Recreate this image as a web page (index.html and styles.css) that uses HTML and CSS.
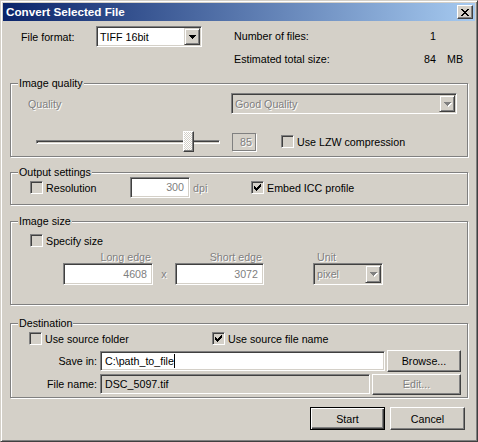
FILE: index.html
```html
<!DOCTYPE html>
<html>
<head>
<meta charset="utf-8">
<title>Convert Selected File</title>
<link rel="stylesheet" href="styles.css">
</head>
<body>
<div class="window">
  <div class="titlebar">
    <span class="title">Convert Selected File</span>
    <div class="close"><svg width="8" height="7" viewBox="0 0 8 7" shape-rendering="crispEdges"><path d="M0 0h2v1H0zM1 1h2v1H1zM2 2h2v1H2zM3 3h2v1H3zM4 4h2v1H4zM5 5h2v1H5zM6 6h2v1H6zM6 0h2v1H6zM5 1h2v1H5zM4 2h2v1H4zM2 4h2v1H2zM1 5h2v1H1zM0 6h2v1H0z" fill="#000"/></svg></div>
  </div>
  <div class="content">
    <div class="top">
      <div class="format">
        <span class="format-label">File format:</span>
        <div class="select fmt-select">
          <span class="select-text">TIFF 16bit</span>
          <span class="drop"><svg width="7" height="4" viewBox="0 0 7 4" shape-rendering="crispEdges"><path d="M0 0h7v1H0zM1 1h5v1H1zM2 2h3v1H2zM3 3h1v1H3z" fill="#000"/></svg></span>
        </div>
      </div>
      <div class="info">
        <span>Number of files:</span><span class="num">1</span><span class="unit"></span>
        <span>Estimated total size:</span><span class="num">84</span><span class="unit">MB</span>
      </div>
    </div>

    <div class="group g-quality">
      <span class="legend">Image quality</span>
      <div class="row q-row1">
        <span class="q-label dis">Quality</span>
        <div class="select q-select disabled">
          <span class="select-text dis">Good Quality</span>
          <span class="drop"><svg class="arrow-dis" width="7" height="4" viewBox="0 0 7 4" shape-rendering="crispEdges"><path d="M0 0h7v1H0zM1 1h5v1H1zM2 2h3v1H2zM3 3h1v1H3z" fill="#808080"/></svg></span>
        </div>
      </div>
      <div class="row q-row2">
        <div class="slider">
          <div class="track"></div>
          <div class="thumb"></div>
        </div>
        <div class="valbox dis">85</div>
        <label class="check c-lzw"><span class="box"></span><span>Use LZW compression</span></label>
      </div>
    </div>

    <div class="group g-output">
      <span class="legend">Output settings</span>
      <div class="row o-row">
        <label class="check c-res"><span class="box"></span><span>Resolution</span></label>
        <div class="field f-300 dis">300</div>
        <span class="dpi dis">dpi</span>
        <label class="check c-icc"><span class="box"><svg width="7" height="7" viewBox="0 0 7 7" shape-rendering="crispEdges"><path d="M6 0h1v1H6zM5 1h2v1H5zM0 2h1v1H0zM4 2h3v1H4zM0 3h2v1H0zM3 3h3v1H3zM0 4h5v1H0zM1 5h3v1H1zM2 6h1v1H2z" fill="#000"/></svg></span><span>Embed ICC profile</span></label>
      </div>
    </div>

    <div class="group g-size">
      <span class="legend">Image size</span>
      <label class="check c-spec"><span class="box"></span><span>Specify size</span></label>
      <div class="size-row">
        <div class="size-col c-long">
          <span class="size-label dis">Long edge</span>
          <div class="field dis">4608</div>
        </div>
        <span class="times dis">x</span>
        <div class="size-col c-short">
          <span class="size-label dis">Short edge</span>
          <div class="field dis">3072</div>
        </div>
        <div class="size-col c-unit">
          <span class="size-label unit-label dis">Unit</span>
          <div class="select u-select disabled">
            <span class="select-text dis">pixel</span>
            <span class="drop"><svg class="arrow-dis" width="7" height="4" viewBox="0 0 7 4" shape-rendering="crispEdges"><path d="M0 0h7v1H0zM1 1h5v1H1zM2 2h3v1H2zM3 3h1v1H3z" fill="#808080"/></svg></span>
          </div>
        </div>
      </div>
    </div>

    <div class="group g-dest">
      <span class="legend">Destination</span>
      <div class="row d-row1">
        <label class="check c-folder"><span class="box"></span><span>Use source folder</span></label>
        <label class="check c-name"><span class="box"><svg width="7" height="7" viewBox="0 0 7 7" shape-rendering="crispEdges"><path d="M6 0h1v1H6zM5 1h2v1H5zM0 2h1v1H0zM4 2h3v1H4zM0 3h2v1H0zM3 3h3v1H3zM0 4h5v1H0zM1 5h3v1H1zM2 6h1v1H2z" fill="#000"/></svg></span><span>Use source file name</span></label>
      </div>
      <div class="row d-row">
        <span class="d-label">Save in:</span>
        <div class="field f-save"><span>C:\path_to_file</span><span class="caret"></span></div>
        <div class="btn b-browse">Browse...</div>
      </div>
      <div class="row d-row d-row3">
        <span class="d-label">File name:</span>
        <div class="field f-name">DSC_5097.tif</div>
        <div class="btn b-edit dis">Edit...</div>
      </div>
    </div>

    <div class="buttons">
      <div class="btn b-main default">Start</div>
      <div class="btn b-main">Cancel</div>
    </div>
  </div>
</div>
</body>
</html>
```

FILE: styles.css
```css
html, body {
  margin: 0;
  padding: 0;
  background: #d4d0c8;
}

body {
  font-family: "Liberation Sans", Arial, sans-serif;
  font-size: 10.7px;
  color: #000;
}

.window {
  width: 478px;
  height: 442px;
  box-sizing: border-box;
  border: 1px solid;
  border-color: #d4d0c8 #404040 #404040 #d4d0c8;
  box-shadow: inset 1px 1px #fff, inset -1px -1px #808080;
  padding: 2px;
  background: #d4d0c8;
}

.titlebar {
  height: 18px;
  display: flex;
  align-items: center;
  justify-content: space-between;
  background: linear-gradient(to right, #0a246a, #a6caf0);
}

.title {
  color: #fff;
  font-weight: bold;
  font-size: 11.7px;
  padding-left: 3px;
  line-height: 14px;
}

.close {
  width: 16px;
  height: 14px;
  box-sizing: border-box;
  margin-right: 2px;
  background: #d4d0c8;
  border: 1px solid;
  border-color: #fff #404040 #404040 #fff;
  box-shadow: inset -1px -1px #808080;
  display: flex;
  align-items: center;
  justify-content: center;
}

.close svg {
  display: block;
  margin-left: -1px;
}

.content {
  padding: 0 7px;
}

.dis {
  color: #808080;
  text-shadow: 1px 1px 0 #fff;
}

/* top section */
.top {
  height: 62px;
  box-sizing: border-box;
  padding-top: 5px;
  display: flex;
  align-items: flex-start;
}

.format {
  display: flex;
  align-items: center;
  height: 21px;
}

.format-label {
  width: 86px;
  box-sizing: border-box;
  padding-left: 11px;
}

.info {
  margin-left: 32px;
  margin-top: 3px;
  display: grid;
  grid-template-columns: 180px 22px 41px;
  row-gap: 9px;
  line-height: 14px;
}

.info .num {
  text-align: right;
}

.info .unit {
  padding-left: 11px;
}

/* select */
.select {
  box-sizing: border-box;
  height: 21px;
  padding: 1px;
  display: flex;
  align-items: center;
  background: #fff;
  border: 1px solid;
  border-color: #808080 #fff #fff #808080;
  box-shadow: inset 1px 1px #404040, inset -1px -1px #d4d0c8;
}

.select.disabled {
  background: #d4d0c8;
}

.select-text {
  flex: 1;
  padding-left: 2px;
  white-space: nowrap;
}

.drop {
  width: 16px;
  height: 17px;
  box-sizing: border-box;
  background: #d4d0c8;
  border: 1px solid;
  border-color: #d4d0c8 #404040 #404040 #d4d0c8;
  box-shadow: inset 1px 1px #fff, inset -1px -1px #808080;
  display: flex;
  align-items: center;
  justify-content: center;
}

.drop svg {
  display: block;
}

.arrow-dis {
  filter: drop-shadow(1px 1px 0 #fff);
}

.fmt-select {
  width: 106px;
}

/* group boxes */
.group {
  position: relative;
  border: 1px solid #808080;
  box-shadow: inset 1px 1px #fff, 1px 1px #fff;
}

.legend {
  position: absolute;
  top: -8px;
  left: 7px;
  padding: 0 1px;
  background: #d4d0c8;
  line-height: 14px;
  white-space: nowrap;
}

.row {
  display: flex;
  align-items: center;
}

/* image quality */
.g-quality {
  padding: 9px 0 4px;
}

.q-row1 {
  height: 21px;
}

.q-label {
  width: 220px;
  box-sizing: border-box;
  padding-left: 17px;
}

.q-select {
  width: 226px;
}

.q-row2 {
  height: 21px;
  margin-top: 17px;
}

.slider {
  position: relative;
  width: 184px;
  height: 21px;
  margin-left: 25px;
  display: flex;
  align-items: center;
}

.track {
  width: 100%;
  height: 4px;
  box-sizing: border-box;
  border: 1px solid;
  border-color: #808080 #fff #fff #808080;
  box-shadow: inset 1px 1px #404040, inset -1px -1px #d4d0c8;
}

.thumb {
  position: absolute;
  left: 147px;
  top: 0;
  width: 11px;
  height: 21px;
  box-sizing: border-box;
  border: 1px solid;
  border-color: #fff #404040 #404040 #fff;
  box-shadow: inset -1px -1px #808080;
  background: repeating-conic-gradient(#fff 0 25%, #d4d0c8 0 50%) 0 0 / 2px 2px;
}

.valbox {
  width: 24px;
  height: 18px;
  box-sizing: border-box;
  margin-left: 12px;
  border: 1px solid #808080;
  box-shadow: 1px 1px #fff;
  text-align: right;
  padding-right: 3px;
  line-height: 16px;
}

/* checkbox */
.check {
  display: flex;
  align-items: center;
  gap: 3px;
  white-space: nowrap;
}

.box {
  width: 13px;
  height: 13px;
  box-sizing: border-box;
  flex: none;
  border: 1px solid;
  border-color: #808080 #fff #fff #808080;
  box-shadow: inset 1px 1px #404040, inset -1px -1px #d4d0c8;
  background: #d4d0c8;
  display: flex;
  align-items: center;
  justify-content: center;
}

.box svg {
  display: block;
}

.c-lzw {
  margin-left: 25px;
}

/* output settings */
.g-output {
  margin-top: 15px;
  padding: 4px 0 6px;
}

.o-row {
  height: 21px;
}

.c-res {
  margin-left: 19px;
  width: 100px;
}

.field {
  box-sizing: border-box;
  height: 21px;
  padding: 1px 5px 1px 4px;
  background: #fff;
  border: 1px solid;
  border-color: #808080 #fff #fff #808080;
  box-shadow: inset 1px 1px #404040, inset -1px -1px #d4d0c8;
  text-align: right;
  line-height: 17px;
  white-space: nowrap;
}

.f-300 {
  width: 60px;
}

.dpi {
  margin-left: 3px;
  width: 58px;
}

/* image size */
.g-size {
  margin-top: 16px;
  padding: 12px 0 19px;
}

.c-spec {
  margin-left: 19px;
  height: 13px;
}

.size-row {
  display: flex;
  margin-top: 4px;
}

.size-col {
  display: flex;
  flex-direction: column;
}

.size-label {
  line-height: 12px;
  height: 12px;
  text-align: right;
  padding-right: 2px;
}

.size-col .field {
  height: 22px;
  line-height: 18px;
}

.c-long {
  margin-left: 52px;
  width: 90px;
}

.times {
  width: 22px;
  align-self: flex-end;
  height: 22px;
  line-height: 22px;
  text-align: center;
}

.c-short {
  width: 89px;
}

.c-unit {
  margin-left: 49px;
  width: 70px;
}

.unit-label {
  text-align: left;
  padding-left: 4px;
}

.u-select {
  height: 22px;
}

.u-select .drop {
  height: 18px;
}

/* destination */
.g-dest {
  margin-top: 18px;
  padding: 8px 0 2px;
}

.d-row1 {
  height: 13px;
}

.c-folder {
  margin-left: 18px;
  width: 183px;
}

.d-row {
  height: 22px;
  margin-top: 5px;
}

.d-row3 {
  margin-top: 1px;
}

.d-label {
  width: 89px;
  box-sizing: border-box;
  padding-right: 3px;
  text-align: right;
}

.f-save {
  width: 285px;
  height: 20px;
  text-align: left;
  line-height: 16px;
  display: flex;
  align-items: center;
  padding-left: 4px;
}

.caret {
  display: inline-block;
  width: 1px;
  height: 14px;
  background: #000;
}

.f-name {
  width: 270px;
  height: 20px;
  text-align: left;
  line-height: 16px;
  background: #d4d0c8;
  padding-left: 4px;
}

/* buttons */
.btn {
  box-sizing: border-box;
  background: #d4d0c8;
  border: 1px solid;
  border-color: #fff #404040 #404040 #fff;
  box-shadow: inset -1px -1px #808080;
  display: flex;
  align-items: center;
  justify-content: center;
  white-space: nowrap;
}

.b-browse {
  margin-left: 2px;
  width: 74px;
  height: 22px;
}

.b-edit {
  margin-left: 2px;
  width: 89px;
  height: 21px;
}

.buttons {
  display: flex;
  justify-content: flex-end;
  gap: 5px;
  margin-top: 9px;
  margin-right: 3px;
}

.b-main {
  width: 75px;
  height: 23px;
}

.b-main.default {
  border: 1px solid #000;
  box-shadow: inset 1px 1px #fff, inset -1px -1px #404040, inset -2px -2px #808080;
}
```
